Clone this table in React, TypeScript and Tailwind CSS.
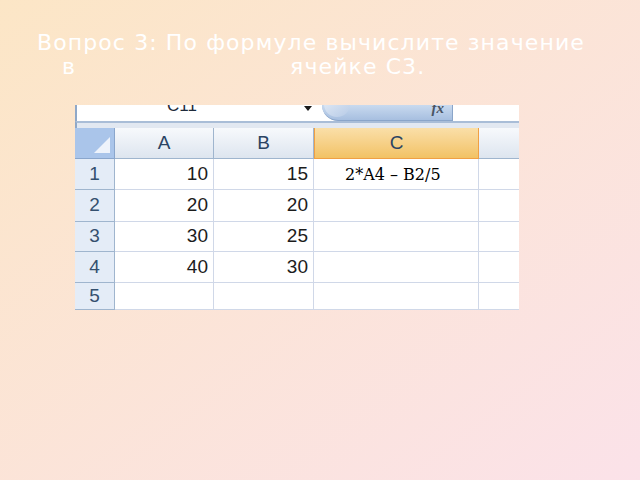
const rows = [
  { n: "1", a: "10", b: "15", h: "h-[31px]" },
  { n: "2", a: "20", b: "20", h: "h-[32px]" },
  { n: "3", a: "30", b: "25", h: "h-[30px]" },
  { n: "4", a: "40", b: "30", h: "h-[31px]" },
  { n: "5", a: "", b: "", h: "h-[27px]" },
];

const Sheet = () => {
  return (
    <div className="ml-[75px] w-[444px] h-[205px] overflow-hidden bg-white font-['Liberation_Sans',sans-serif]">
      {/* formula bar, mostly cut off */}
      <div className="flex h-[16px]">
        <div className="relative w-[247px] border-l-2 border-[#8fa8c8] bg-white overflow-hidden">
          <span className="absolute left-[90px] top-[-12px] text-[17px] text-[#1e2a3a]">C11</span>
          <span className="absolute left-[227px] top-[1px] w-0 h-0 border-l-[4px] border-r-[4px] border-t-[5px] border-l-transparent border-r-transparent border-t-[#1b1b1b]" />
        </div>
        <div className="relative w-[131px] overflow-hidden rounded-bl-[22px] border-r border-b border-[#8aa5c9] bg-gradient-to-b from-[#c9daef] to-[#a7bfe0]">
          <div className="absolute left-[2px] top-[-14px] w-[26px] h-[26px] rounded-full bg-gradient-to-br from-[#eef3fa] to-[#b9cce7] opacity-80" />
          <span className="absolute right-[8px] top-[-8px] font-['Liberation_Serif',serif] italic font-bold text-[15px] text-[#4a5564]">fx</span>
        </div>
        <div className="flex-1 bg-white" />
      </div>
      <div className="h-[7px] border-t-2 border-[#a9bdd7] bg-[#e2e8f1] border-l-2 border-l-[#8fa8c8]" />

      {/* grid */}
      <div className="grid grid-cols-[40px_99px_100px_165px_40px]">
        <div className="relative h-[31px] bg-[#aac5ea] border-r border-b border-[#8aa6cc]">
          <div className="absolute right-[4px] bottom-[5px] w-0 h-0 border-l-[16px] border-b-[16px] border-l-transparent border-b-[#eef3fb]" />
        </div>
        <div className="h-[31px] flex items-center justify-center bg-gradient-to-b from-[#f7f9fc] to-[#dde5ef] border-r border-b border-[#9fb5ce] text-[19px] text-[#2b4463]">A</div>
        <div className="h-[31px] flex items-center justify-center bg-gradient-to-b from-[#f7f9fc] to-[#dde5ef] border-r border-b border-[#9fb5ce] text-[19px] text-[#2b4463]">B</div>
        <div className="h-[31px] flex items-center justify-center bg-gradient-to-b from-[#fadfa8] to-[#f2c264] border-l border-r border-b border-[#f0a044] text-[19px] text-[#2b4463]">C</div>
        <div className="h-[31px] bg-gradient-to-b from-[#f7f9fc] to-[#dde5ef] border-b border-[#9fb5ce]" />

        {rows.map((r) => (
          <div key={r.n} className="contents">
            <div className={`${r.h} flex items-center justify-center bg-[#e4ecf7] border-r border-b border-[#9fb5ce] text-[19px] text-[#34506f]`}>
              {r.n}
            </div>
            <div className={`${r.h} flex items-center justify-end pr-[5px] border-r border-b border-[#d0d8e8] text-[19px] text-[#1c1c1c]`}>
              {r.a}
            </div>
            <div className={`${r.h} flex items-center justify-end pr-[5px] border-r border-b border-[#d0d8e8] text-[19px] text-[#1c1c1c]`}>
              {r.b}
            </div>
            <div className={`${r.h} pl-[31px] pt-[7px] border-r border-b border-[#d0d8e8] font-['DejaVu_Serif',serif] text-[16px] leading-[18px] text-black`}>
              {r.n === "1" ? "2*A4 – B2/5" : ""}
            </div>
            <div className={`${r.h} border-b border-[#d0d8e8]`} />
          </div>
        ))}
      </div>
    </div>
  );
};

export default function App() {
  return (
    <div className="w-[640px] h-[480px] overflow-hidden bg-gradient-to-br from-[#fce6c6] to-[#fbe2e9]">
      <div className="h-[105px] pt-[31px] font-['DejaVu_Sans',sans-serif] text-[22px] leading-[24px] tracking-[1.1px] text-white">
        <div className="pl-[37px]">Вопрос 3: По формуле вычислите значение</div>
        <div className="flex">
          <span className="ml-[62px]">в</span>
          <span className="ml-[214px]">ячейке С3.</span>
        </div>
      </div>
      <Sheet />
    </div>
  );
}
